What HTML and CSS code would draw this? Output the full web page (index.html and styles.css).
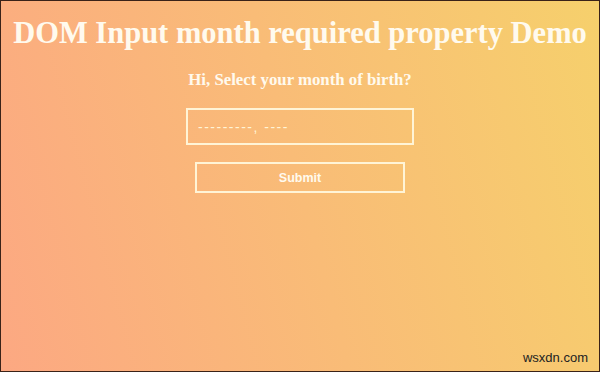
FILE: index.html
```html
<!DOCTYPE html>
<html lang="en">
<head>
  <meta charset="UTF-8">
  <title>DOM Input month required property Demo</title>
  <meta name="viewport" content="width=device-width, initial-scale=1">
  <link rel="stylesheet" href="styles.css">
</head>
<body>

  <div class="page">
    <h1>DOM Input month required property Demo</h1>

    <form class="month-form" onsubmit="return false">
      <h4>Hi, Select your month of birth?</h4>
      <input type="text" class="month-input" placeholder="---------, ----" required>
      <button type="submit" class="submit-btn">Submit</button>
    </form>

    <span class="watermark">wsxdn.com</span>
  </div>

</body>
</html>
```

FILE: styles.css
```css
/* General Styles */
body {
  margin: 0;
  padding: 0;
  font-family: 'Liberation Serif', 'Times New Roman', serif;
}

.page {
  position: relative;
  box-sizing: border-box;
  height: 372px;
  border: 1px solid #3a2218;
  background: linear-gradient(75deg, #fca882, #f6d06c);
  color: #fffaee;
  text-align: center;
  overflow: hidden;
}

h1 {
  margin: 15px 0 0;
  font-size: 30.5px;
  font-weight: bold;
}

.month-form {
  display: flex;
  flex-direction: column;
  align-items: center;
}

h4 {
  margin: 19px 0 0;
  font-size: 16.8px;
  font-weight: bold;
}

.month-input {
  box-sizing: border-box;
  width: 228px;
  height: 37px;
  margin-top: 18px;
  padding: 0 10px;
  background: transparent;
  border: 2px solid #fff4d6;
  font-family: 'Liberation Sans', Arial, sans-serif;
  font-size: 14px;
  letter-spacing: 1.5px;
  color: #fffaee;
  outline: none;
}

.month-input::placeholder {
  color: #fff4d6;
}

.submit-btn {
  box-sizing: border-box;
  width: 210px;
  height: 31px;
  margin-top: 17px;
  background: transparent;
  border: 2px solid #fff4d6;
  font-family: 'Liberation Sans', Arial, sans-serif;
  font-size: 12.5px;
  font-weight: bold;
  color: #fffaee;
  cursor: pointer;
}

.watermark {
  position: absolute;
  right: 11px;
  bottom: 6px;
  font-family: 'Liberation Sans', Arial, sans-serif;
  font-size: 13px;
  color: #222;
}
```
